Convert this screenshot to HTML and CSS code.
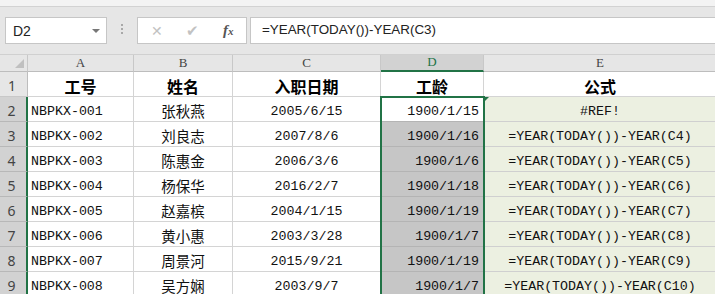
FILE: index.html
```html
<!DOCTYPE html>
<html lang="zh-CN">
<head>
    <meta charset="UTF-8">
    <title>工龄计算</title>
    <link rel="stylesheet" href="styles.css">
</head>
<body>
    <!-- 功能区底边 -->
    <div class="ribbon"></div>

    <!-- 名称框 + 编辑栏 -->
    <div class="toolbar">
        <div class="namebox">
            <span>D2</span>
            <span class="drop"></span>
        </div>
        <div class="grip"><i></i><i></i><i></i></div>
        <div class="fxbox">
            <span class="cancel">&#x2715;</span>
            <span class="ok">&#x2714;</span>
            <span class="fx">f<small>x</small></span>
        </div>
        <div class="formula">=YEAR(TODAY())-YEAR(C3)</div>
    </div>

    <!-- 表格 -->
    <div class="sheet">
        <div class="corner"><span></span></div>
        <div class="colhead">A</div>
        <div class="colhead">B</div>
        <div class="colhead">C</div>
        <div class="colhead active">D</div>
        <div class="colhead last">E</div>

        <div class="rowhead">1</div>
        <div class="cell title">工号</div>
        <div class="cell title">姓名</div>
        <div class="cell title">入职日期</div>
        <div class="cell title">工龄</div>
        <div class="cell title last">公式</div>

        <div class="rowhead sel">2</div>
        <div class="cell id">NBPKX-001</div>
        <div class="cell name">张秋燕</div>
        <div class="cell date">2005/6/15</div>
        <div class="cell age first">1900/1/15</div>
        <div class="cell expr last"><span class="flag"></span>#REF!</div>

        <div class="rowhead sel">3</div>
        <div class="cell id">NBPKX-002</div>
        <div class="cell name">刘良志</div>
        <div class="cell date">2007/8/6</div>
        <div class="cell age">1900/1/16</div>
        <div class="cell expr last">=YEAR(TODAY())-YEAR(C4)</div>

        <div class="rowhead sel">4</div>
        <div class="cell id">NBPKX-003</div>
        <div class="cell name">陈惠金</div>
        <div class="cell date">2006/3/6</div>
        <div class="cell age">1900/1/6</div>
        <div class="cell expr last">=YEAR(TODAY())-YEAR(C5)</div>

        <div class="rowhead sel">5</div>
        <div class="cell id">NBPKX-004</div>
        <div class="cell name">杨保华</div>
        <div class="cell date">2016/2/7</div>
        <div class="cell age">1900/1/18</div>
        <div class="cell expr last">=YEAR(TODAY())-YEAR(C6)</div>

        <div class="rowhead sel">6</div>
        <div class="cell id">NBPKX-005</div>
        <div class="cell name">赵嘉槟</div>
        <div class="cell date">2004/1/15</div>
        <div class="cell age">1900/1/19</div>
        <div class="cell expr last">=YEAR(TODAY())-YEAR(C7)</div>

        <div class="rowhead sel">7</div>
        <div class="cell id">NBPKX-006</div>
        <div class="cell name">黄小惠</div>
        <div class="cell date">2003/3/28</div>
        <div class="cell age">1900/1/7</div>
        <div class="cell expr last">=YEAR(TODAY())-YEAR(C8)</div>

        <div class="rowhead sel">8</div>
        <div class="cell id">NBPKX-007</div>
        <div class="cell name">周景河</div>
        <div class="cell date">2015/9/21</div>
        <div class="cell age">1900/1/19</div>
        <div class="cell expr last">=YEAR(TODAY())-YEAR(C9)</div>

        <div class="rowhead sel">9</div>
        <div class="cell id">NBPKX-008</div>
        <div class="cell name">吴方娴</div>
        <div class="cell date">2003/9/7</div>
        <div class="cell age">1900/1/7</div>
        <div class="cell expr last">=YEAR(TODAY())-YEAR(C10)</div>

        <!-- 选区边框 -->
        <div class="selection"></div>
    </div>
</body>
</html>
```

FILE: styles.css
```css
* {
    box-sizing: border-box;
}
body {
    margin: 0;
    width: 715px;
    height: 294px;
    overflow: hidden;
    background-color: #e6e6e6;
    font-family: 'Liberation Sans', 'Noto Sans CJK SC', sans-serif;
    color: #000;
}
.ribbon {
    height: 7px;
    background-color: #f3f3f3;
    border-bottom: 1px solid #d2d2d2;
}
/* 编辑栏 */
.toolbar {
    display: flex;
    align-items: flex-start;
    height: 48px;
    padding: 10px 0 0 5px;
    background-color: #e6e6e6;
    border-bottom: 1px solid #d0d0d0;
}
.namebox {
    display: flex;
    align-items: center;
    justify-content: space-between;
    width: 102px;
    height: 27px;
    padding: 0 6px 0 7px;
    background-color: #fff;
    border: 1px solid #c6c6c6;
    font-size: 14px;
    color: #222;
}
.drop {
    width: 0;
    height: 0;
    border-left: 4px solid transparent;
    border-right: 4px solid transparent;
    border-top: 4px solid #777;
}
.grip {
    display: flex;
    flex-direction: column;
    gap: 2px;
    width: 30px;
    padding-top: 7px;
    align-items: center;
}
.grip i {
    width: 2px;
    height: 2px;
    background-color: #a8a8a8;
}
.fxbox {
    display: flex;
    align-items: center;
    width: 110px;
    height: 27px;
    padding-left: 13px;
    background-color: #fff;
    border: 1px solid #c6c6c6;
    color: #c2c2c2;
}
.cancel {
    font-size: 14px;
    width: 35px;
}
.ok {
    font-size: 15px;
    width: 37px;
}
.fx {
    font-family: 'Liberation Serif', serif;
    font-style: italic;
    font-weight: bold;
    font-size: 15px;
    color: #555;
}
.fx small {
    font-size: 11px;
}
.formula {
    flex: 1;
    height: 27px;
    margin-left: 3px;
    padding: 4px 0 0 11px;
    background-color: #fff;
    border: 1px solid #c6c6c6;
    border-right: none;
    font-size: 13.4px;
    color: #222;
}
/* 工作表 */
.sheet {
    position: relative;
    display: grid;
    grid-template-columns: 28px 106px 99px 148px 103px 232px;
    grid-template-rows: 17px 25px;
    grid-auto-rows: 25px;
    height: 239px;
    overflow: hidden;
    background-color: #fff;
}
.corner {
    position: relative;
    background-color: #e6e6e6;
    border-right: 1px solid #c8c8c8;
    border-bottom: 1px solid #bdbdbd;
}
.corner span {
    position: absolute;
    right: 3px;
    bottom: 3px;
    width: 0;
    height: 0;
    border-left: 9px solid transparent;
    border-bottom: 9px solid #c0c0c0;
}
.colhead {
    display: flex;
    align-items: flex-end;
    justify-content: center;
    padding-bottom: 0;
    background-color: #e6e6e6;
    border-right: 1px solid #c8c8c8;
    border-bottom: 1px solid #bdbdbd;
    font-family: 'Liberation Serif', serif;
    font-size: 13px;
    color: #444;
}
.colhead.active {
    background-color: #d2d2d2;
    border-bottom: 2px solid #217346;
    color: #217346;
}
.colhead.last,
.cell.last {
    border-right: none;
}
.rowhead {
    display: flex;
    align-items: flex-end;
    justify-content: center;
    padding: 0 3px 1px 0;
    background-color: #e6e6e6;
    border-right: 1px solid #bdbdbd;
    border-bottom: 1px solid #c8c8c8;
    font-family: 'Noto Sans', sans-serif;
    font-size: 14px;
    color: #444;
}
.rowhead.sel {
    background-color: #d2d2d2;
    border-right: 2px solid #217346;
    border-bottom-color: #b8b8b8;
}
.cell {
    position: relative;
    display: flex;
    align-items: center;
    padding-top: 5px;
    border-right: 1px solid #d4d4d4;
    border-bottom: 1px solid #d4d4d4;
    font-family: 'Liberation Mono', 'Noto Sans CJK SC', monospace;
    font-size: 13.3px;
    color: #111;
    white-space: nowrap;
}
.cell.title {
    justify-content: center;
    padding-top: 3px;
    font-family: 'Noto Sans CJK SC', sans-serif;
    font-weight: bold;
    font-size: 16px;
    color: #000;
}
.cell.id {
    padding-left: 3px;
}
.cell.name {
    justify-content: center;
    padding-top: 3px;
    font-family: 'Noto Sans CJK SC', sans-serif;
    font-size: 14.5px;
}
.cell.date {
    justify-content: center;
}
.cell.age {
    justify-content: flex-end;
    padding-right: 4px;
    background-color: #c6c6c6;
    border-bottom-color: #b4b4b4;
}
.cell.age.first {
    background-color: #fff;
}
.cell.expr {
    justify-content: center;
    background-color: #ecf0e1;
    border-bottom-color: #d0d0d0;
}
.flag {
    position: absolute;
    left: 0;
    top: 0;
    width: 0;
    height: 0;
    border-top: 5px solid #217346;
    border-right: 5px solid transparent;
}
.selection {
    position: absolute;
    left: 380px;
    top: 41px;
    width: 105px;
    height: 220px;
    border: 2px solid #217346;
    pointer-events: none;
}
```
